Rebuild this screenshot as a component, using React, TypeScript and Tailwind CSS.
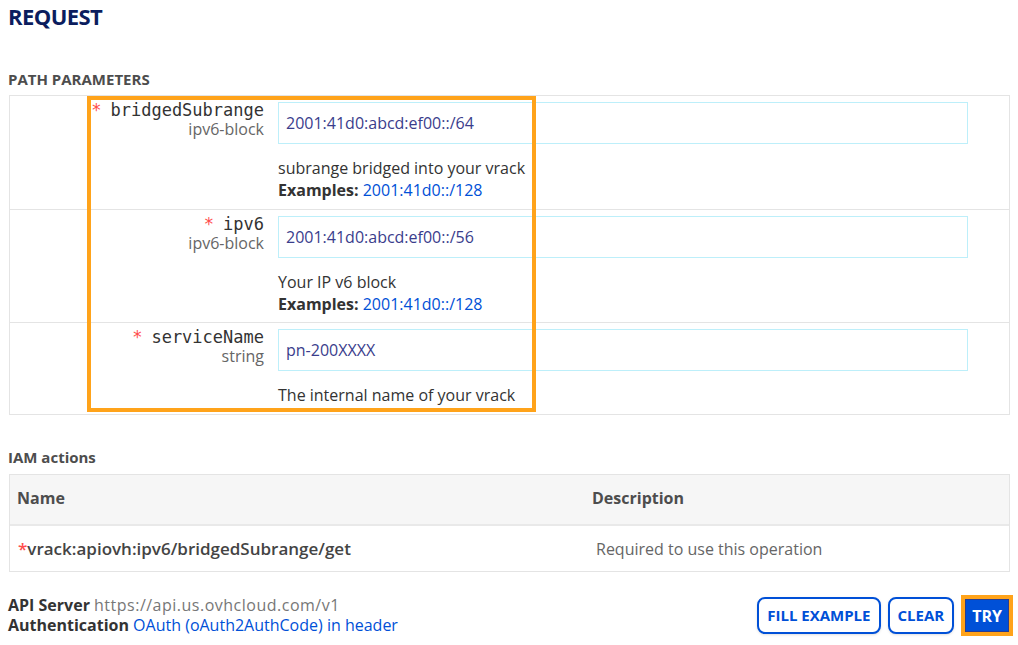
import React from 'react';

const params = [
  {
    name: 'bridgedSubrange',
    type: 'ipv6-block',
    value: '2001:41d0:abcd:ef00::/64',
    description: 'subrange bridged into your vrack',
    example: '2001:41d0::/128',
  },
  {
    name: 'ipv6',
    type: 'ipv6-block',
    value: '2001:41d0:abcd:ef00::/56',
    description: 'Your IP v6 block',
    example: '2001:41d0::/128',
  },
  {
    name: 'serviceName',
    type: 'string',
    value: 'pn-200XXXX',
    description: 'The internal name of your vrack',
    example: '',
  },
];

const sans = "font-['Open_Sans',sans-serif]";

export default function App() {
  return (
    <div className={`${sans} relative min-h-screen bg-white text-[#4d4d4d]`}>
      <div className="px-2 pt-[2px]">
        {/* Title */}
        <h1 className="text-[22px] font-bold leading-[28px] tracking-tight text-[#0b1d5e]">REQUEST</h1>

        {/* Path parameters */}
        <h2 className="mt-[39px] text-[15px] font-bold leading-[20px] text-[#4d4d4d]">PATH PARAMETERS</h2>
        <div className="relative ml-px mt-[6px] border border-[#e4e4e4]">
          {params.map((p, i) => (
            <div
              key={p.name}
              className={`flex ${i > 0 ? 'border-t border-[#e4e4e4]' : ''} ${p.example ? 'h-[113px]' : 'h-[92px]'}`}
            >
              <div className="flex w-[254px] flex-col items-end pt-[5px] text-right">
                <div className="font-['DejaVu_Sans_Mono',monospace] text-[17px] leading-[19px] text-[#333]">
                  <span className="mr-[9px] text-[#ff4d4d]">*</span>
                  {p.name}
                </div>
                <div className="text-[16px] leading-[18px] text-[#666]">{p.type}</div>
              </div>
              <div className="ml-[14px] flex-1 pr-[41px] pt-[6px]">
                <div className="flex h-[42px] items-center border border-[#bdeffa] px-[7px] text-[16px] text-[#3a3d8c]">
                  {p.value}
                </div>
                <div className="mt-[13px] text-[16px] leading-[22px] text-[#333]">{p.description}</div>
                {p.example && (
                  <div className="text-[16px] leading-[22px] text-[#333]">
                    <span className="font-bold">Examples:</span>{' '}
                    <span className="text-[#0050d7]">{p.example}</span>
                  </div>
                )}
              </div>
            </div>
          ))}
          {/* Highlight overlay */}
          <div className="pointer-events-none absolute left-[77px] top-0 h-[316px] w-[449px] border-[4px] border-[#ffa31a]" />
        </div>

        {/* IAM actions */}
        <h2 className="mt-[32px] text-[15px] font-bold leading-[20px] text-[#4d4d4d]">IAM actions</h2>
        <div className="ml-px mt-[7px] border border-[#e4e4e4] text-[16px]">
          <div className="flex h-[51px] items-center border-b-2 border-[#e9e9e9] bg-[#f6f6f6] pb-[4px] font-bold text-[#4d4d4d]">
            <div className="w-[575px] pl-[7px]">Name</div>
            <div className="pl-[7px]">Description</div>
          </div>
          <div className="flex h-[45px] items-center">
            <div className="w-[579px] pl-[8px] text-[17px] font-semibold text-[#444]">
              <span className="text-[#ff4d4d]">*</span>vrack:apiovh:ipv6/bridgedSubrange/get
            </div>
            <div className="pl-[7px] text-[#666]">Required to use this operation</div>
          </div>
        </div>

        {/* Footer */}
        <div className="mt-[23px] flex items-start justify-between">
          <div className="text-[16px] leading-[20px]">
            <div>
              <span className="font-bold text-[#333]">API Server</span>{' '}
              <span className="tracking-[0.5px] text-[#777]">https://api.us.ovhcloud.com/v1</span>
            </div>
            <div>
              <span className="font-bold text-[#333]">Authentication</span>{' '}
              <span className="text-[#0050d7]">OAuth (oAuth2AuthCode) in header</span>
            </div>
          </div>
          <div className="-mr-[3px] flex items-center gap-[7px]">
            <button className="h-[37px] rounded-[8px] border-2 border-[#0050d7] bg-white px-[8px] text-[15px] font-bold text-[#0050d7] shadow-sm">
              FILL EXAMPLE
            </button>
            <button className="h-[37px] rounded-[8px] border-2 border-[#0050d7] bg-white px-[8px] text-[15px] font-bold text-[#0050d7] shadow-sm">
              CLEAR
            </button>
            <div className="border-[4px] border-[#ffa31a]">
              <button className="h-[33px] border border-[#2a3d8f] bg-[#0050d7] px-[6px] text-[16px] font-bold text-white">
                TRY
              </button>
            </div>
          </div>
        </div>
      </div>
    </div>
  );
}
